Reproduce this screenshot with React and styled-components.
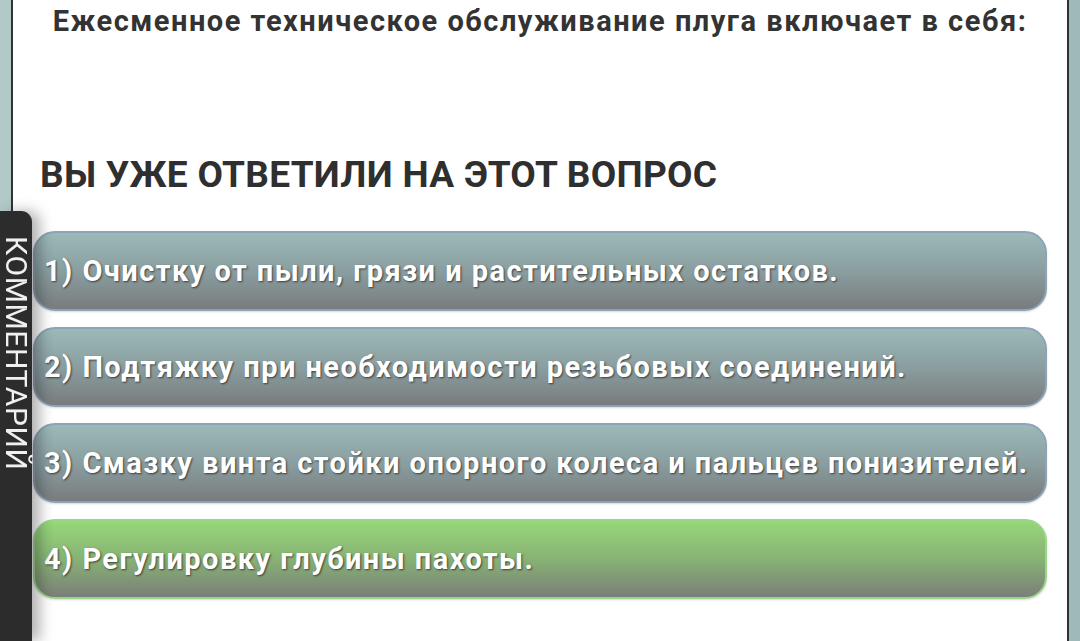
import React from 'react';
import styled, { createGlobalStyle, css } from 'styled-components';

const GlobalStyle = createGlobalStyle`
    html, body {
        margin: 0;
        padding: 0;
        height: 641px;
        overflow: hidden;
        background: linear-gradient(90deg, #b3c9c8 0%, #9fb9b9 100%);
        font-family: Roboto, "Liberation Sans", Arial, sans-serif;
    }
`;

const answers = [
    { text: '1) Очистку от пыли, грязи и растительных остатков.' },
    { text: '2) Подтяжку при необходимости резьбовых соединений.' },
    { text: '3) Смазку винта стойки опорного колеса и пальцев понизителей.' },
    { text: '4) Регулировку глубины пахоты.', right: true },
];

const App = () => (
    <>
        <GlobalStyle />
        <Frame>
            <Question>Ежесменное техническое обслуживание плуга включает в себя:</Question>
            <Notice>ВЫ УЖЕ ОТВЕТИЛИ НА ЭТОТ ВОПРОС</Notice>
            <AnswerList>
                {answers.map((a) => (
                    <Answer key={a.text} $right={a.right}>{a.text}</Answer>
                ))}
            </AnswerList>
        </Frame>
        <CommentTab>КОММЕНТАРИЙ</CommentTab>
    </>
);

const Frame = styled.div`
    box-sizing: border-box;
    margin: 0 11px 0 11px;
    height: 641px;
    background: #fff;
    border-left: 2px solid #2e3333;
    border-right: 2px solid #2e3333;
    padding: 3px 20px 0 20px;
`;

const Question = styled.h1`
    margin: 0;
    font-size: 29px;
    line-height: 36px;
    font-weight: 700;
    letter-spacing: 1.5px;
    color: #333;
    text-align: center;
`;

const Notice = styled.h2`
    margin: 114px 0 0 7px;
    font-size: 37px;
    line-height: 44px;
    font-weight: 700;
    letter-spacing: 0.3px;
    color: #2f2f2f;
`;

const AnswerList = styled.div`
    display: flex;
    flex-direction: column;
    gap: 16px;
    margin-top: 34px;
`;

const Answer = styled.div`
    box-sizing: border-box;
    height: 80px;
    display: flex;
    align-items: center;
    padding-left: 9px;
    border-radius: 22px;
    border: 2px solid #8ea3b9;
    background: linear-gradient(180deg, #9cb9b8 0%, #8a9ea0 50%, #797c7e 100%);
    color: #fff;
    font-size: 29px;
    font-weight: 700;
    letter-spacing: 1.45px;
    text-shadow: 1px 1px 2px rgba(40, 40, 40, 0.8);
    box-shadow: 0 1px 2px rgba(0, 0, 0, 0.15);
    white-space: nowrap;
    ${(p) => p.$right && css`
        border-color: #9ad68a;
        background: linear-gradient(180deg, #96d87a 0%, #88b274 50%, #7a7f78 100%);
    `}
`;

const CommentTab = styled.div`
    position: fixed;
    left: 0;
    top: 211px;
    bottom: 0;
    width: 32px;
    background: #2c2c2c;
    border-top-right-radius: 11px;
    box-shadow: 8px 0 14px rgba(0, 0, 0, 0.3);
    writing-mode: vertical-rl;
    color: #f0f0f0;
    font-family: Roboto, "Liberation Sans", Arial, sans-serif;
    font-size: 30px;
    line-height: 32px;
    letter-spacing: 0.6px;
    padding-top: 25px;
    box-sizing: border-box;
    white-space: nowrap;
`;

export default App;
